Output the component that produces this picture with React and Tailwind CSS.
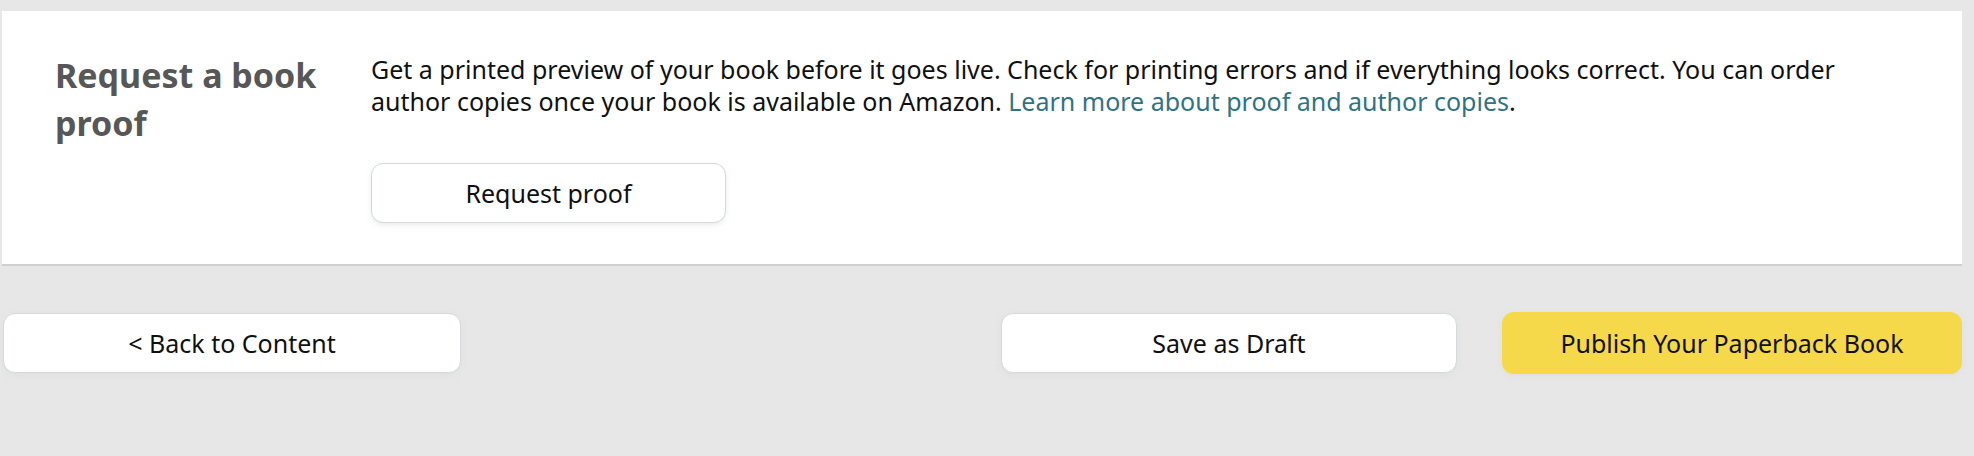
import React from "react";

const font = { fontFamily: '"Noto Sans", "Open Sans", sans-serif' };

const Button = ({ children, className = "" }) => (
    <button
        className={`flex items-center justify-center rounded-[12px] text-[25px] leading-[32px] text-[#0f1111] ${className}`}
    >
        {children}
    </button>
);

function App() {
    return (
        <div className="min-h-screen w-full bg-[#e7e7e7] pt-[11px] pl-[2px]" style={font}>
            <div className="w-[1960px]">
                {/* Proof card */}
                <section className="flex bg-white border-b-2 border-[#cfcfcf] pt-[40px] pb-[41px] pl-[53px] pr-[40px]">
                    <div className="w-[316px] shrink-0 pr-[30px]">
                        <h3 className="text-[34px] leading-[48px] font-bold text-[#575757]">Request a book proof</h3>
                    </div>
                    <div className="flex-1 pt-[2px]">
                        <p className="text-[25px] leading-[32px] text-[#0f1111]">
                            Get a printed preview of your book before it goes live. Check for printing errors and if everything looks correct. You can order
                            <br />
                            author copies once your book is available on Amazon.{" "}
                            <a href="#" className="text-[#2f7384]">Learn more about proof and author copies</a>.
                        </p>
                        <Button className="mt-[46px] w-[355px] h-[60px] bg-white border border-[#d5d9d9] shadow-[0_2px_5px_0_rgba(213,217,217,0.5)]">
                            Request proof
                        </Button>
                    </div>
                </section>

                {/* Footer actions */}
                <div className="flex items-center justify-between mt-[46px]">
                    <Button className="ml-[1px] w-[458px] h-[60px] bg-white border border-[#d5d9d9] shadow-[0_2px_5px_0_rgba(213,217,217,0.5)]">
                        &lt; Back to Content
                    </Button>
                    <div className="flex items-center gap-[45px]">
                        <Button className="w-[456px] h-[60px] bg-white border border-[#d5d9d9] shadow-[0_2px_5px_0_rgba(213,217,217,0.5)]">
                            Save as Draft
                        </Button>
                        <Button className="w-[460px] h-[62px] bg-[#f6d84b] shadow-[0_2px_5px_0_rgba(213,217,217,0.5)]">
                            Publish Your Paperback Book
                        </Button>
                    </div>
                </div>
            </div>
        </div>
    );
}

export default App;
